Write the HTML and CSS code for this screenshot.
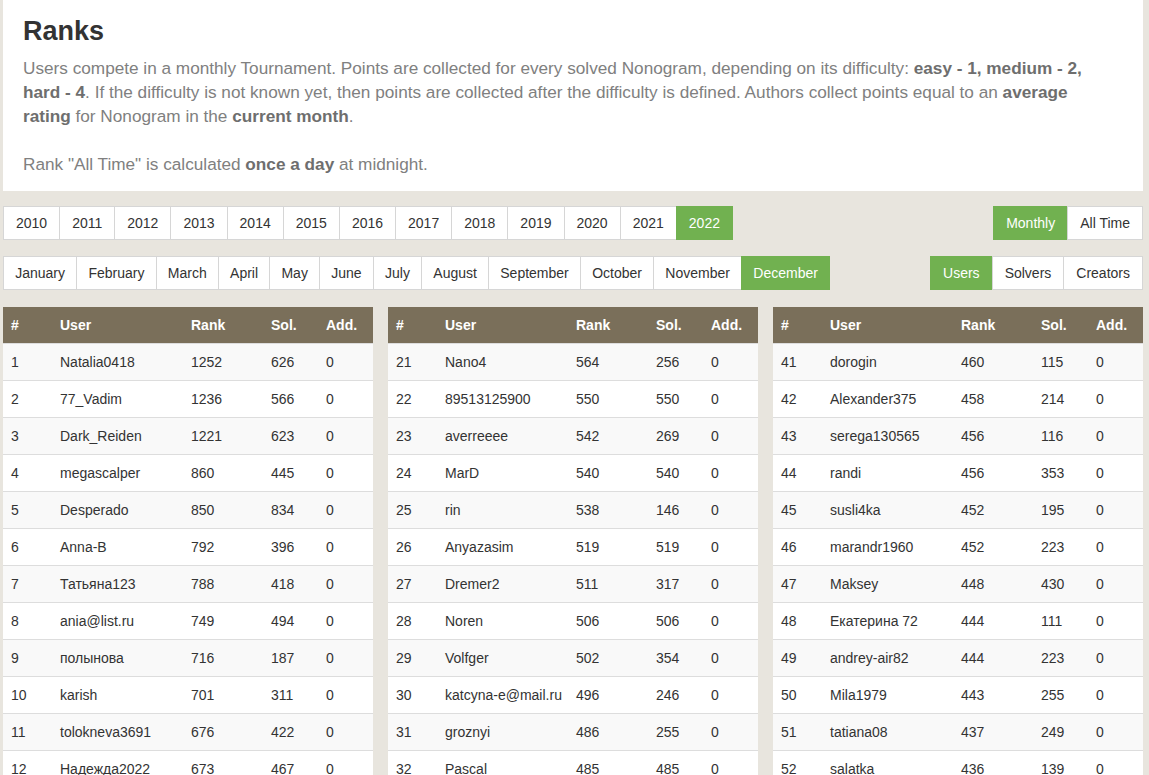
FILE: index.html
```html
<!DOCTYPE html>
<html>
<head>
<meta charset="utf-8">
<title>Ranks</title>
<link rel="stylesheet" href="styles.css">
</head>
<body>
<div class="page">
  <section class="intro">
    <h1 class="title">Ranks</h1>
    <p class="desc">Users compete in a monthly Tournament. Points are collected for every solved Nonogram, depending on its difficulty: <b>easy - 1, medium - 2, hard - 4</b>. If the difficulty is not known yet, then points are collected after the difficulty is defined. Authors collect points equal to an <b>average rating</b> for Nonogram in the <b>current month</b>.<br><br>Rank "All Time" is calculated <b>once a day</b> at midnight.</p>
  </section>

  <div class="bar">
    <div class="group">
      <span class="btn">2010</span><span class="btn">2011</span><span class="btn">2012</span><span class="btn">2013</span><span class="btn">2014</span><span class="btn">2015</span><span class="btn">2016</span><span class="btn">2017</span><span class="btn">2018</span><span class="btn">2019</span><span class="btn">2020</span><span class="btn">2021</span><span class="btn active">2022</span>
    </div>
    <div class="group">
      <span class="btn active">Monthly</span><span class="btn">All Time</span>
    </div>
  </div>

  <div class="bar">
    <div class="group months">
      <span class="btn">January</span><span class="btn">February</span><span class="btn">March</span><span class="btn">April</span><span class="btn">May</span><span class="btn">June</span><span class="btn">July</span><span class="btn">August</span><span class="btn">September</span><span class="btn">October</span><span class="btn">November</span><span class="btn active">December</span>
    </div>
    <div class="group">
      <span class="btn active">Users</span><span class="btn">Solvers</span><span class="btn">Creators</span>
    </div>
  </div>

  <div class="tables">
    <table class="ranks">
      <colgroup><col class="c-num"><col class="c-user"><col class="c-rank"><col class="c-sol"><col class="c-add"></colgroup>
      <thead><tr><th>#</th><th>User</th><th>Rank</th><th>Sol.</th><th>Add.</th></tr></thead>
      <tbody>
        <tr><td>1</td><td>Natalia0418</td><td>1252</td><td>626</td><td>0</td></tr>
        <tr><td>2</td><td>77_Vadim</td><td>1236</td><td>566</td><td>0</td></tr>
        <tr><td>3</td><td>Dark_Reiden</td><td>1221</td><td>623</td><td>0</td></tr>
        <tr><td>4</td><td>megascalper</td><td>860</td><td>445</td><td>0</td></tr>
        <tr><td>5</td><td>Desperado</td><td>850</td><td>834</td><td>0</td></tr>
        <tr><td>6</td><td>Anna-B</td><td>792</td><td>396</td><td>0</td></tr>
        <tr><td>7</td><td>Татьяна123</td><td>788</td><td>418</td><td>0</td></tr>
        <tr><td>8</td><td>ania@list.ru</td><td>749</td><td>494</td><td>0</td></tr>
        <tr><td>9</td><td>полынова</td><td>716</td><td>187</td><td>0</td></tr>
        <tr><td>10</td><td>karish</td><td>701</td><td>311</td><td>0</td></tr>
        <tr><td>11</td><td>tolokneva3691</td><td>676</td><td>422</td><td>0</td></tr>
        <tr><td>12</td><td>Надежда2022</td><td>673</td><td>467</td><td>0</td></tr>
      </tbody>
    </table>
    <table class="ranks">
      <colgroup><col class="c-num"><col class="c-user"><col class="c-rank"><col class="c-sol"><col class="c-add"></colgroup>
      <thead><tr><th>#</th><th>User</th><th>Rank</th><th>Sol.</th><th>Add.</th></tr></thead>
      <tbody>
        <tr><td>21</td><td>Nano4</td><td>564</td><td>256</td><td>0</td></tr>
        <tr><td>22</td><td>89513125900</td><td>550</td><td>550</td><td>0</td></tr>
        <tr><td>23</td><td>averreeee</td><td>542</td><td>269</td><td>0</td></tr>
        <tr><td>24</td><td>MarD</td><td>540</td><td>540</td><td>0</td></tr>
        <tr><td>25</td><td>rin</td><td>538</td><td>146</td><td>0</td></tr>
        <tr><td>26</td><td>Anyazasim</td><td>519</td><td>519</td><td>0</td></tr>
        <tr><td>27</td><td>Dremer2</td><td>511</td><td>317</td><td>0</td></tr>
        <tr><td>28</td><td>Noren</td><td>506</td><td>506</td><td>0</td></tr>
        <tr><td>29</td><td>Volfger</td><td>502</td><td>354</td><td>0</td></tr>
        <tr><td>30</td><td>katcyna-e@mail.ru</td><td>496</td><td>246</td><td>0</td></tr>
        <tr><td>31</td><td>groznyi</td><td>486</td><td>255</td><td>0</td></tr>
        <tr><td>32</td><td>Pascal</td><td>485</td><td>485</td><td>0</td></tr>
      </tbody>
    </table>
    <table class="ranks">
      <colgroup><col class="c-num"><col class="c-user"><col class="c-rank"><col class="c-sol"><col class="c-add"></colgroup>
      <thead><tr><th>#</th><th>User</th><th>Rank</th><th>Sol.</th><th>Add.</th></tr></thead>
      <tbody>
        <tr><td>41</td><td>dorogin</td><td>460</td><td>115</td><td>0</td></tr>
        <tr><td>42</td><td>Alexander375</td><td>458</td><td>214</td><td>0</td></tr>
        <tr><td>43</td><td>serega130565</td><td>456</td><td>116</td><td>0</td></tr>
        <tr><td>44</td><td>randi</td><td>456</td><td>353</td><td>0</td></tr>
        <tr><td>45</td><td>susli4ka</td><td>452</td><td>195</td><td>0</td></tr>
        <tr><td>46</td><td>marandr1960</td><td>452</td><td>223</td><td>0</td></tr>
        <tr><td>47</td><td>Maksey</td><td>448</td><td>430</td><td>0</td></tr>
        <tr><td>48</td><td>Екатерина 72</td><td>444</td><td>111</td><td>0</td></tr>
        <tr><td>49</td><td>andrey-air82</td><td>444</td><td>223</td><td>0</td></tr>
        <tr><td>50</td><td>Mila1979</td><td>443</td><td>255</td><td>0</td></tr>
        <tr><td>51</td><td>tatiana08</td><td>437</td><td>249</td><td>0</td></tr>
        <tr><td>52</td><td>salatka</td><td>436</td><td>139</td><td>0</td></tr>
      </tbody>
    </table>
  </div>
</div>
</body>
</html>
```

FILE: styles.css
```css
* { box-sizing: border-box; }
html, body {
  margin: 0;
  padding: 0;
  background: #e8e5de;
}
body {
  font-family: "Liberation Sans", Arial, Helvetica, sans-serif;
  color: #333;
}
.page {
  padding: 0 6px 0 3px;
}
.intro {
  background: #fff;
  padding: 14px 40px 15px 20px;
}
.title {
  margin: 0 0 8px 0;
  font-size: 27px;
  line-height: 34px;
  font-weight: bold;
  color: #333;
}
.desc {
  margin: 0;
  font-size: 17.2px;
  line-height: 24px;
  color: #808080;
}
.desc b {
  color: #6e6e6e;
}
.bar {
  display: flex;
  justify-content: space-between;
  margin-top: 15px;
}
.bar + .bar {
  margin-top: 16px;
}
.group {
  display: flex;
}
.btn {
  display: block;
  height: 34px;
  line-height: 32px;
  padding: 0 12px;
  font-size: 14px;
  color: #333;
  background: #fff;
  border: 1px solid #d6d6d6;
  margin-left: -1px;
}
.months .btn {
  padding: 0 11.2px;
}
.btn:first-child {
  margin-left: 0;
}
.btn.active {
  background: #71b150;
  border-color: #71b150;
  color: #fff;
}
.tables {
  display: flex;
  gap: 15px;
  margin-top: 17px;
}
.ranks {
  flex: 1 1 0;
  width: 370px;
  border-collapse: collapse;
  table-layout: fixed;
  font-size: 14px;
  background: #fff;
}
.c-num { width: 49px; }
.c-user { width: 131px; }
.c-rank { width: 80px; }
.c-sol { width: 55px; }
.c-add { width: 55px; }
.ranks th {
  background: #7a6f5a;
  color: #fff;
  font-weight: bold;
  text-align: left;
  padding: 8px;
  line-height: 20px;
}
.ranks td {
  padding: 8px;
  line-height: 20px;
  border-top: 1px solid #dddddd;
  white-space: nowrap;
  overflow: hidden;
}
.ranks tbody tr:nth-child(odd) td {
  background: #f9f9f9;
}
```
